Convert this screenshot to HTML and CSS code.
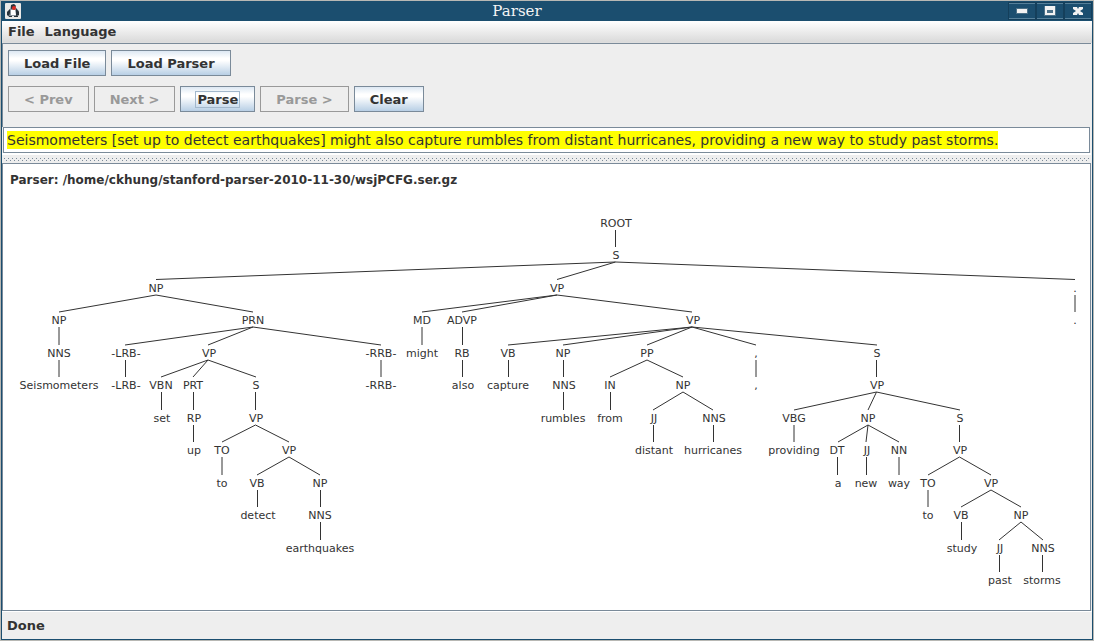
FILE: index.html
```html
<!DOCTYPE html>
<html lang="en">
<head>
<meta charset="utf-8">
<title>Parser</title>
<link rel="stylesheet" href="styles.css">
</head>
<body>
<div class="window">
  <header class="titlebar">
    <svg class="app-icon" width="16" height="16" viewBox="0 0 16 16" aria-hidden="true">
      <rect width="16" height="16" rx="1" fill="#e9e9e7"/>
      <path d="M6 2l3-1 2 2v2l3 3v4l-2 2-2-1H6l-2 1-2-2V9l3-3z" fill="#8b959c"/>
      <path d="M6 2l3-1 2 2-2 2-3 1zM5 6L2 9v3l2 1 1-3zM11 5l3 4v3l-3 1zM4 13h3v1H4zM9 13h4v1H9z" fill="#28323a"/>
      <path d="M6 7h4l1 5H6z" fill="#fff"/>
      <circle cx="9" cy="5" r="2" fill="#e02a20"/>
    </svg>
    <h1 class="title">Parser</h1>
    <div class="window-controls">
      <button class="win-btn" type="button" aria-label="Minimize"><svg width="12" height="12" viewBox="0 0 12 12"><path d="M0 3h12v6H0z" fill="#4c7188"/><path d="M1 4h10v4H1z" fill="#f2f2f2"/></svg></button>
      <button class="win-btn" type="button" aria-label="Maximize"><svg width="12" height="12" viewBox="0 0 12 12"><path d="M0 1h12v10H0z" fill="#4c7188"/><path d="M1 1h10v9H1zM3 5v3h6V5z" fill="#f2f2f2" fill-rule="evenodd"/></svg></button>
      <button class="win-btn" type="button" aria-label="Close"><svg width="12" height="12" viewBox="0 0 12 12"><path d="M1 2h4l1 2 1-2h4v2L8 6l3 2v2H7L6 8l-1 2H1V8l3-2-3-2z" fill="#f2f2f2"/></svg></button>
    </div>
  </header>
  <nav class="menubar">
    <button class="menu" type="button">File</button>
    <button class="menu" type="button">Language</button>
  </nav>
  <div class="toolbar">
    <div class="tool-row">
      <button class="btn" type="button">Load File</button>
      <button class="btn" type="button">Load Parser</button>
    </div>
    <div class="tool-row">
      <button class="btn" type="button" disabled>&lt; Prev</button>
      <button class="btn" type="button" disabled>Next &gt;</button>
      <button class="btn" type="button"><span class="focus-ring">Parse</span></button>
      <button class="btn" type="button" disabled>Parse &gt;</button>
      <button class="btn" type="button">Clear</button>
    </div>
  </div>
  <div class="sentence" contenteditable="true" role="textbox" aria-label="Sentence" spellcheck="false"><mark class="selected">Seismometers [set up to detect earthquakes] might also capture rumbles from distant hurricanes, providing a new way to study past storms.</mark></div>
  <div class="splitter"></div>
  <main class="panel">
    <h2 class="parser-path">Parser: /home/ckhung/stanford-parser-2010-11-30/wsjPCFG.ser.gz</h2>
    <svg class="tree" width="1080" height="396" viewBox="3 200 1080 396" role="img" aria-label="Parse tree">
      <path class="edges" d="M615.5 230V247
        M615.5 262L156 279.5M615.5 262L557 279.5M615.5 262L1075 279.5
        M156 295L59 312M156 295L253 312M557 295L422 312M557 295L462 312M557 295L692 312M1075 295V312
        M59 327V345M253 327L125 345M253 327L208 345M253 327L381 345M422 327V345M462.5 327V345
        M692 327L508 345M692 327L563 345M692 327L647 345M692 327L756 345M692 327L877 345
        M59 360V377M125.5 360V377M208 360L161 377M208 360L193 377M208 360L256 377M381 360V377M462.5 360V377M508.5 360V377M563.5 360V377M647 360L610 377M647 360L683 377M756 360V377M876.5 360V377
        M161.5 392V410M193.5 392V410M255.5 392V410M563.5 392V410M610.5 392V410M683 392L653 410M683 392L713 410M876.5 392L794 410M876.5 392L868 410M876.5 392L960 410
        M193.5 425V442M255.5 425L222 442M255.5 425L289 442M653.5 425V442M713.5 425V442M794 425V442M868 425L838 442M868 425L866 442M868 425L899 442M959.5 425V442
        M222 457V475M289 457L257 475M289 457L320 475M837.5 457V475M866.5 457V475M899 457V475M959.5 457L928 475M959.5 457L991 475
        M257.5 490V507M320.5 490V507M928 490V507M991 490L961 507M991 490L1021 507
        M320.5 522V540M961.5 522V540M1021 522L999 540M1021 522L1043 540
        M999.5 555V572M1042.5 555V572"/>
      <g class="nodes">
        <text x="616" y="227">ROOT</text>
        <text x="616" y="259">S</text>
        <text x="156" y="292">NP</text><text x="557" y="292">VP</text><text x="1075" y="292">.</text>
        <text x="59" y="324">NP</text><text x="253" y="324">PRN</text><text x="422" y="324">MD</text><text x="462" y="324">ADVP</text><text x="693" y="324">VP</text><text x="1075" y="324">.</text>
        <text x="59" y="357">NNS</text><text x="126" y="357">-LRB-</text><text x="209" y="357">VP</text><text x="381" y="357">-RRB-</text><text x="422" y="357">might</text><text x="462" y="357">RB</text><text x="508" y="357">VB</text><text x="563" y="357">NP</text><text x="647" y="357">PP</text><text x="756" y="357">,</text><text x="877" y="357">S</text>
        <text x="59" y="389">Seismometers</text><text x="126" y="389">-LRB-</text><text x="161" y="389">VBN</text><text x="193" y="389">PRT</text><text x="256" y="389">S</text><text x="381" y="389">-RRB-</text><text x="463" y="389">also</text><text x="508" y="389">capture</text><text x="564" y="389">NNS</text><text x="610" y="389">IN</text><text x="683" y="389">NP</text><text x="756" y="389">,</text><text x="877" y="389">VP</text>
        <text x="162" y="422">set</text><text x="194" y="422">RP</text><text x="256" y="422">VP</text><text x="563" y="422">rumbles</text><text x="610" y="422">from</text><text x="654" y="422">JJ</text><text x="714" y="422">NNS</text><text x="794" y="422">VBG</text><text x="868" y="422">NP</text><text x="960" y="422">S</text>
        <text x="194" y="454">up</text><text x="222" y="454">TO</text><text x="289" y="454">VP</text><text x="654" y="454">distant</text><text x="713" y="454">hurricanes</text><text x="794" y="454">providing</text><text x="837" y="454">DT</text><text x="867" y="454">JJ</text><text x="899" y="454">NN</text><text x="960" y="454">VP</text>
        <text x="222" y="487">to</text><text x="257" y="487">VB</text><text x="320" y="487">NP</text><text x="838" y="487">a</text><text x="866" y="487">new</text><text x="899" y="487">way</text><text x="928" y="487">TO</text><text x="991" y="487">VP</text>
        <text x="258" y="519">detect</text><text x="320" y="519">NNS</text><text x="928" y="519">to</text><text x="961" y="519">VB</text><text x="1021" y="519">NP</text>
        <text x="320" y="552">earthquakes</text><text x="962" y="552">study</text><text x="1000" y="552">JJ</text><text x="1043" y="552">NNS</text>
        <text x="1000" y="584">past</text><text x="1042" y="584">storms</text>
      </g>
    </svg>
  </main>
  <footer class="status">Done</footer>
</div>
</body>
</html>
```
FILE: styles.css
```css
* { box-sizing: border-box; }
body {
  margin: 0;
  font-family: "DejaVu Sans", sans-serif;
  font-size: 13px;
  color: #333;
  background: #b8b8b4;
}
button { font: inherit; color: inherit; }
.window {
  display: flex;
  flex-direction: column;
  min-height: 100vh;
  border: 1px solid #b8b8b4;
  background: #eee;
  box-shadow: inset 1px 0 #1b4e6f, inset -1px -1px #1b4e6f;
}
.titlebar {
  display: flex;
  align-items: center;
  height: 20px;
  padding: 0 2px 0 4px;
  background: #1b4e6f;
}
.app-icon { flex: none; }
.title {
  flex: 1;
  margin: 0;
  padding-left: 4px;
  text-align: center;
  font: 15px/20px "DejaVu Serif", serif;
  color: #f4f4f4;
}
.window-controls { display: flex; gap: 2px; }
.win-btn {
  display: flex;
  align-items: center;
  justify-content: center;
  width: 26px;
  height: 16px;
  padding: 0;
  border: 0;
  border-top: 1px solid #56809a;
  border-bottom: 1px solid #56809a;
  background: #1b4e6f;
  box-shadow: 0 0 0 1px #143f5b;
}
.menubar {
  display: flex;
  gap: 10px;
  height: 22px;
  margin: 0 1px;
  padding: 0 6px;
  border-bottom: 1px solid #ddd;
  background: linear-gradient(#fff, #dadada);
}
.menu {
  padding: 0;
  border: 0;
  background: none;
  font-weight: bold;
}
.toolbar {
  display: flex;
  flex-direction: column;
  gap: 10px;
  margin: 0 2px 0 1px;
  padding: 6px 5px 15px;
  border-top: 1px solid #7a8a99;
  border-left: 1px solid #7a8a99;
}
.tool-row { display: flex; gap: 5px; }
.btn {
  height: 26px;
  padding: 0 15px;
  border: 1px solid #7a8a99;
  background: linear-gradient(#dde8f3 0%, #fff 30%, #fff 40%, #b8cfe5 100%);
  font-weight: bold;
}
.btn:disabled { border-color: #999; background: #eee; color: #999; }
.focus-ring { padding: 0 1px; outline: 1px solid #a3b8cc; }
.sentence {
  height: 26px;
  margin: 0 3px 0 2px;
  padding: 3px;
  border: 1px solid #7a8a99;
  background: #fff;
  font-size: 14px;
  line-height: 18px;
  white-space: nowrap;
  overflow: hidden;
}
.selected { display: inline-block; background: #ff0; color: #333; }
.splitter {
  height: 10px;
  margin: 0 2px 0 1px;
  padding: 3px 2px 2px;
  border-top: 2px solid #fff;
  background-color: #eee;
  background-image:
    conic-gradient(at 1px 1px, transparent 75%, #7a8a99 0),
    conic-gradient(at 1px 1px, transparent 75%, #7a8a99 0);
  background-size: 4px 4px;
  background-position: 0 0, 2px 2px;
  background-origin: content-box;
  background-clip: content-box, content-box;
}
.panel {
  flex: 1;
  margin: 0 2px 0 1px;
  border: 1px solid #7a8a99;
  background: #fff;
  overflow: hidden;
}
.parser-path { margin: 0; padding: 8px 7px 12px; font-size: 12px; line-height: 16px; }
.tree { display: block; }
.edges { fill: none; stroke: #333; stroke-width: 1; }
.nodes { font-size: 11px; text-anchor: middle; fill: #333; }
.status {
  margin: 0 1px 1px;
  padding: 1px 5px 0;
  border-top: 1px solid #fff;
  font-weight: bold;
  line-height: 26px;
}
```
